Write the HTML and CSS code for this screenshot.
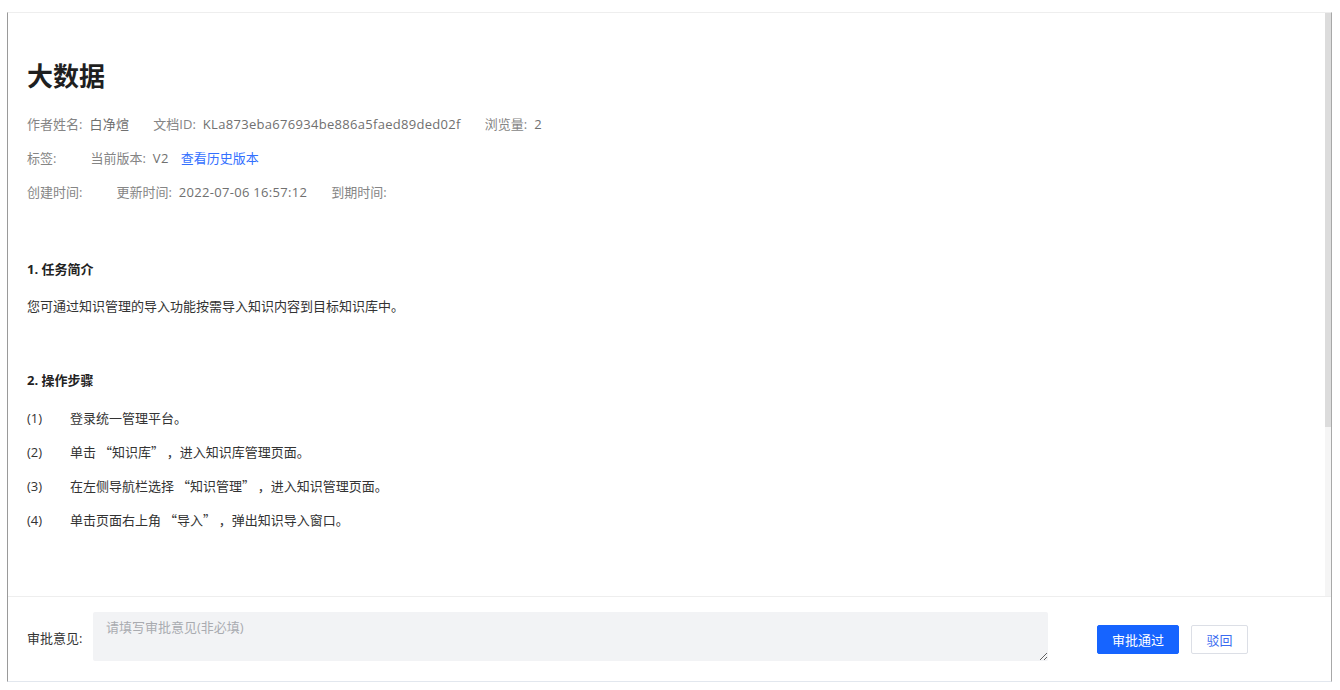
FILE: index.html
```html
<!DOCTYPE html>
<html lang="zh-CN">
<head>
<meta charset="utf-8">
<title>大数据</title>
<link rel="stylesheet" href="styles.css">
</head>
<body>
<div class="frame">
  <div class="doc-pane">
    <div class="doc-scroll">
      <div class="doc">
        <h1 class="doc-title">大数据</h1>
        <div class="meta-row">
          <span class="meta-item"><span class="meta-label">作者姓名:</span><span class="meta-value">白净煊</span></span>
          <span class="meta-item"><span class="meta-label">文档ID:</span><span class="meta-value">KLa873eba676934be886a5faed89ded02f</span></span>
          <span class="meta-item"><span class="meta-label">浏览量:</span><span class="meta-value">2</span></span>
        </div>
        <div class="meta-row">
          <span class="meta-item"><span class="meta-label">标签:</span><span class="meta-value empty"></span></span>
          <span class="meta-item"><span class="meta-label">当前版本:</span><span class="meta-value">V2</span><a class="meta-link" href="#">查看历史版本</a></span>
        </div>
        <div class="meta-row">
          <span class="meta-item"><span class="meta-label">创建时间:</span><span class="meta-value empty"></span></span>
          <span class="meta-item"><span class="meta-label">更新时间:</span><span class="meta-value">2022-07-06 16:57:12</span></span>
          <span class="meta-item"><span class="meta-label">到期时间:</span><span class="meta-value empty"></span></span>
        </div>

        <div class="doc-body">
          <h3 class="sec-title first">1. 任务简介</h3>
          <p class="para">您可通过知识管理的导入功能按需导入知识内容到目标知识库中。</p>
          <h3 class="sec-title">2. 操作步骤</h3>
          <ol class="steps">
            <li class="step"><span class="step-no">(1)</span><span class="step-text">登录统一管理平台。</span></li>
            <li class="step"><span class="step-no">(2)</span><span class="step-text">单击 “知识库” ，进入知识库管理页面。</span></li>
            <li class="step"><span class="step-no">(3)</span><span class="step-text">在左侧导航栏选择 “知识管理” ，进入知识管理页面。</span></li>
            <li class="step"><span class="step-no">(4)</span><span class="step-text">单击页面右上角 “导入” ，弹出知识导入窗口。</span></li>
          </ol>
        </div>
      </div>
    </div>
    <div class="scrollbar"><div class="scrollbar-thumb"></div></div>
  </div>
  <div class="approve-bar">
    <label class="approve-label" for="opinion">审批意见:</label>
    <textarea id="opinion" class="approve-input" placeholder="请填写审批意见(非必填)"></textarea>
    <div class="approve-actions">
      <button class="btn btn-primary" type="button">审批通过</button>
      <button class="btn btn-default" type="button">驳回</button>
    </div>
  </div>
</div>
</body>
</html>
```

FILE: styles.css
```css
* { box-sizing: border-box; }

html, body {
  margin: 0;
  padding: 0;
  background: #ffffff;
  font-family: "Open Sans", "Noto Sans CJK SC", "Noto Sans", sans-serif;
  font-size: 13px;
  color: #333333;
}

.frame {
  margin: 12px 0 0 7px;
  width: 1325px;
  height: 670px;
  display: flex;
  flex-direction: column;
  border-top: 1px solid #eeeeee;
  border-left: 1px solid #9a9a9a;
  border-right: 1px solid #a8a8a8;
  border-bottom: 1px solid #e2e7ee;
  background: #ffffff;
}

.doc-pane {
  position: relative;
  flex: 1;
  min-height: 0;
}

.doc-scroll {
  height: 100%;
  overflow: hidden;
}

.scrollbar {
  position: absolute;
  top: 0;
  right: 0;
  bottom: 0;
  width: 6px;
  background: #f5f5f5;
}

.scrollbar-thumb {
  height: 414px;
  background: #dcdcdc;
}

.doc {
  padding: 44px 19px 300px 19px;
}

.doc-title {
  margin: 0 0 14px 0;
  font-family: "Noto Sans CJK SC", sans-serif;
  font-size: 26px;
  line-height: 36px;
  font-weight: 700;
  color: #1f1f1f;
}

.meta-row {
  display: flex;
  align-items: center;
  height: 34px;
  line-height: 34px;
  color: #7a7a7a;
  font-size: 13px;
  white-space: nowrap;
}

.meta-item {
  display: inline-flex;
  align-items: center;
  margin-right: 24px;
}

.meta-label { color: #858585; }

.meta-value {
  margin-left: 7px;
  color: #707070;
  letter-spacing: 0.3px;
}

.meta-value.empty { min-width: 3px; }

.meta-link {
  margin-left: 12px;
  color: #3370ff;
  text-decoration: none;
}

.doc-body { margin-top: 43px; }

.sec-title {
  margin: 40px 0 0 0;
  font-size: 13px;
  line-height: 34px;
  font-weight: 700;
  color: #222222;
}

.sec-title.first { margin-top: 0; }

.para {
  margin: 3px 0 0 0;
  line-height: 34px;
  color: #333333;
}

.steps {
  list-style: none;
  margin: 4px 0 0 0;
  padding: 0;
}

.step {
  display: flex;
  line-height: 34px;
  color: #333333;
}

.step-no {
  width: 43px;
  flex: none;
}

.step-text {
  font-family: "Noto Sans CJK SC", sans-serif;
}

.approve-bar {
  flex: none;
  height: 85px;
  display: flex;
  align-items: center;
  padding: 0 83px 0 19px;
  border-top: 1px solid #eeeeee;
}

.approve-label {
  flex: none;
  width: 66px;
  margin-top: -3px;
  color: #333333;
  font-size: 13px;
}

.approve-input {
  flex: 1;
  height: 49px;
  margin-top: -5px;
  border: none;
  border-radius: 2px;
  background: #f2f3f5;
  padding: 6px 13px;
  font-family: inherit;
  font-size: 13px;
  line-height: 18px;
  color: #333333;
  outline: none;
}

.approve-input::placeholder { color: #a9abb0; }

.approve-actions {
  flex: none;
  display: flex;
  gap: 12px;
  margin-left: 49px;
  margin-top: 0;
}

.btn {
  height: 29px;
  padding: 0;
  font-family: inherit;
  font-size: 13px;
  border-radius: 2px;
  cursor: pointer;
}

.btn-primary {
  width: 82px;
  background: #1664ff;
  border: 1px solid #1664ff;
  color: #ffffff;
}

.btn-default {
  width: 57px;
  background: #ffffff;
  border: 1px solid #dcdfe6;
  color: #3c6cf0;
}
```
